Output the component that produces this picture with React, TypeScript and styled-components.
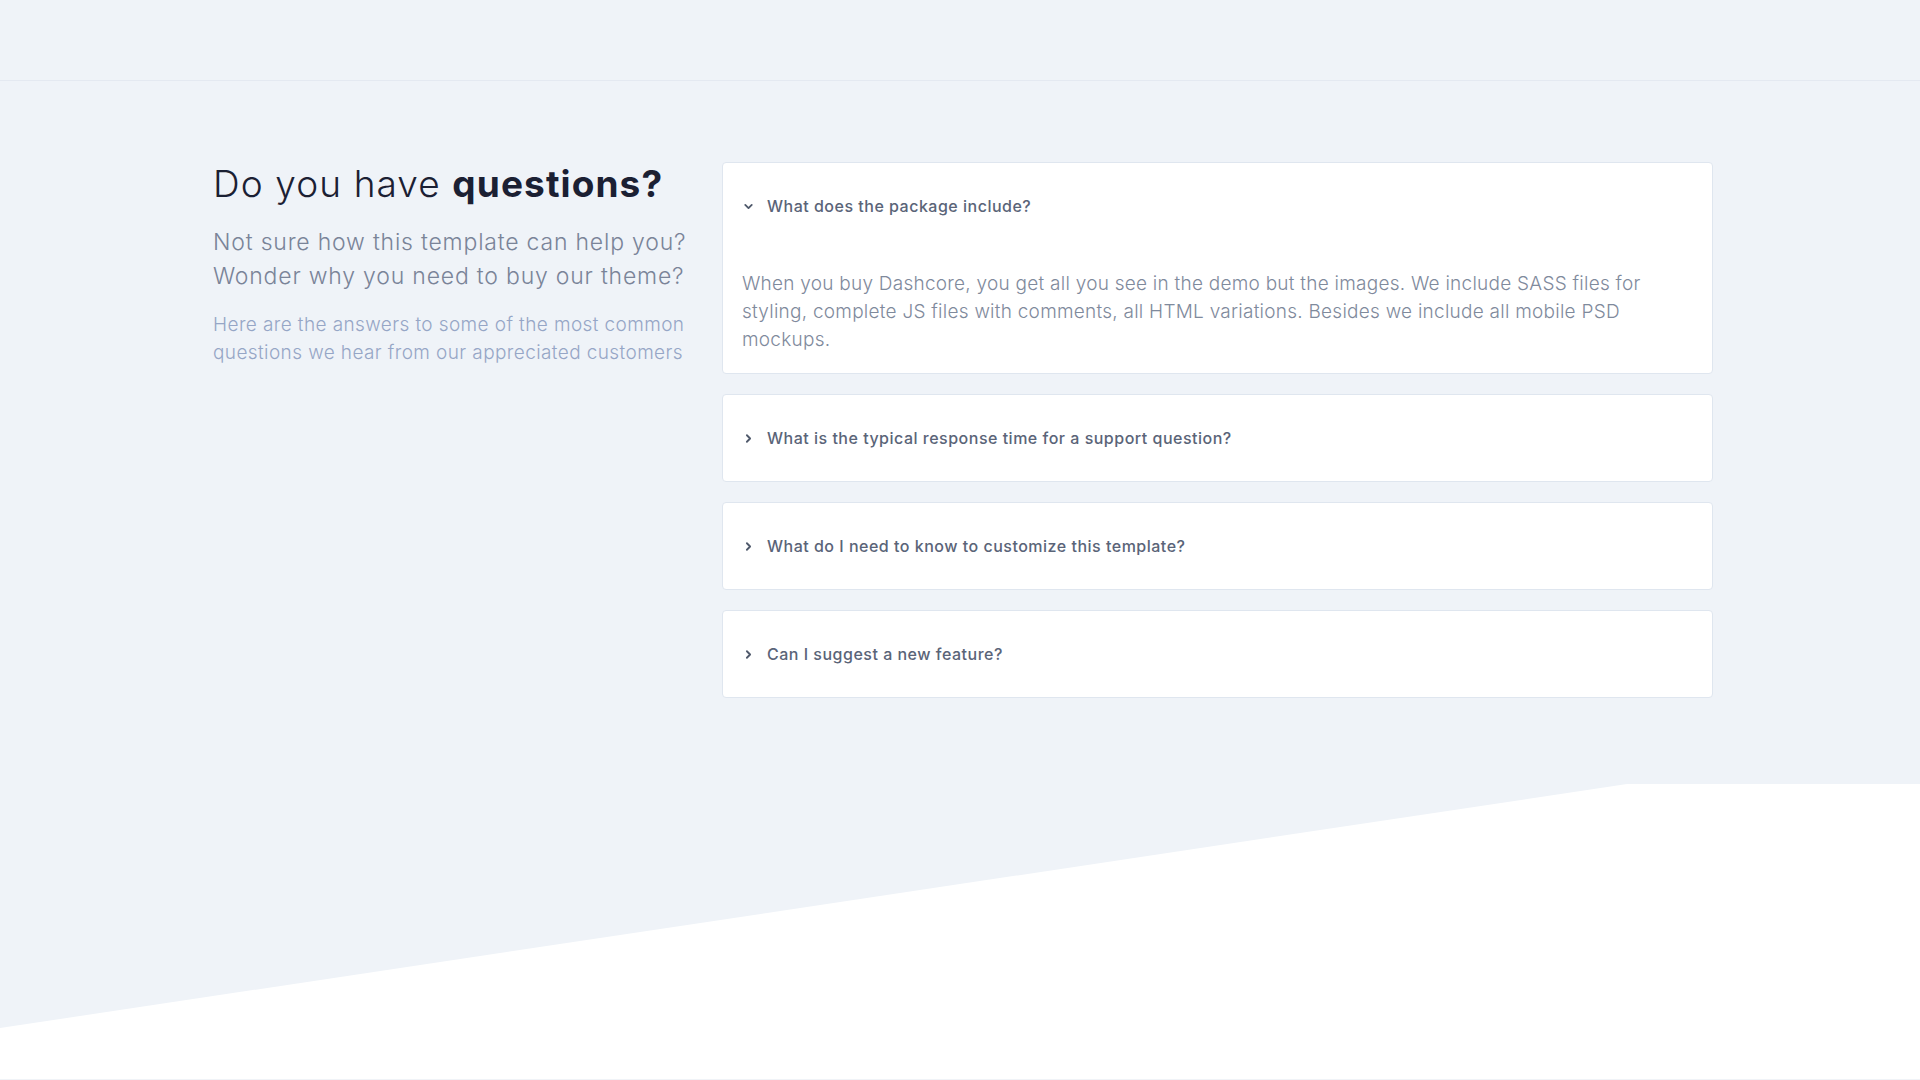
import React, { useState } from 'react';
import styled, { createGlobalStyle } from 'styled-components';
import { ChevronDown, ChevronRight } from 'lucide-react';

const GlobalStyle = createGlobalStyle`
  html, body {
    margin: 0;
    padding: 0;
    background: #eff3f8;
    font-family: "Inter", "Open Sans", sans-serif;
  }
  * {
    box-sizing: border-box;
  }
`;

const Page = styled.div`
  width: 100%;
  display: flex;
  flex-direction: column;
  background: #eff3f8;
`;

const TopBar = styled.header`
  height: 81px;
  flex-shrink: 0;
  border-bottom: 1px solid #e4e9f1;
`;

const FaqSection = styled.section`
  padding: 81px 0 86px;
`;

const Container = styled.div`
  width: 1500px;
  margin: 0 207px 0 213px;
  display: grid;
  grid-template-columns: 477px 991px;
  gap: 32px;
  align-items: start;
`;

const Intro = styled.div`
  display: flex;
  flex-direction: column;
`;

const Heading = styled.h2`
  margin: 0;
  font-size: 37px;
  line-height: 44px;
  font-weight: 300;
  color: #1b2033;
  letter-spacing: 1.1px;

  b {
    font-weight: 700;
  }
`;

const Lead = styled.p`
  margin: 19px 0 0;
  font-size: 23px;
  line-height: 34px;
  font-weight: 300;
  color: #7a8498;
  letter-spacing: 0.8px;
`;

const Note = styled.p`
  margin: 18px 0 0;
  font-size: 19px;
  line-height: 28px;
  font-weight: 300;
  color: #96a6c6;
  letter-spacing: 0.4px;
`;

const List = styled.div`
  display: flex;
  flex-direction: column;
  gap: 20px;
`;

const Card = styled.div`
  background: #ffffff;
  border: 1px solid #dfe6ef;
  border-radius: 4px;
`;

const Question = styled.button`
  width: 100%;
  display: flex;
  align-items: center;
  gap: 12px;
  padding: 31px 19px;
  border: none;
  background: none;
  cursor: pointer;
  text-align: left;
  font-family: inherit;
  font-size: 16px;
  line-height: 24px;
  font-weight: 500;
  color: #5a6478;
  letter-spacing: 0.5px;

  svg {
    flex-shrink: 0;
    color: #4f596b;
  }
`;

const Answer = styled.p`
  margin: 0;
  padding: 21px 19px 19px;
  font-size: 19px;
  line-height: 28px;
  font-weight: 300;
  color: #7f8a9c;
  letter-spacing: 0.25px;
`;

const ShapeDivider = styled.div`
  height: 295px;
  flex-shrink: 0;

  svg {
    display: block;
    width: 100%;
    height: 100%;
  }
`;

const NextSection = styled.div`
  height: 20px;
  background: #ffffff;
  border-top: 1px solid #f0f3f7;
`;

const faqs = [
  {
    q: 'What does the package include?',
    a: 'When you buy Dashcore, you get all you see in the demo but the images. We include SASS files for styling, complete JS files with comments, all HTML variations. Besides we include all mobile PSD mockups.',
  },
  {
    q: 'What is the typical response time for a support question?',
    a: 'Our support team usually answers within one business day, often much faster.',
  },
  {
    q: 'What do I need to know to customize this template?',
    a: 'Basic knowledge of HTML, CSS and a little JavaScript is enough to adapt the template.',
  },
  {
    q: 'Can I suggest a new feature?',
    a: 'Of course, we love hearing ideas from our customers.',
  },
];

const App = () => {
  const [open, setOpen] = useState(0);

  return (
    <Page>
      <GlobalStyle />
      <TopBar />
      <FaqSection>
        <Container>
          <Intro>
            <Heading>
              Do you have <b>questions?</b>
            </Heading>
            <Lead>
              Not sure how this template can help you? Wonder why you need to buy our theme?
            </Lead>
            <Note>
              Here are the answers to some of the most common questions we hear from our
              appreciated customers
            </Note>
          </Intro>
          <List>
            {faqs.map((item, i) => (
              <Card key={item.q}>
                <Question onClick={() => setOpen(open === i ? -1 : i)}>
                  {open === i ? (
                    <ChevronDown size={13} strokeWidth={3.4} />
                  ) : (
                    <ChevronRight size={13} strokeWidth={3.4} />
                  )}
                  {item.q}
                </Question>
                {open === i && <Answer>{item.a}</Answer>}
              </Card>
            ))}
          </List>
        </Container>
      </FaqSection>
      <ShapeDivider>
        <svg viewBox="0 0 1920 295" preserveAspectRatio="none">
          <polygon points="0,244 1627,0 1920,0 1920,295 0,295" fill="#ffffff" />
        </svg>
      </ShapeDivider>
      <NextSection />
    </Page>
  );
};

export default App;
